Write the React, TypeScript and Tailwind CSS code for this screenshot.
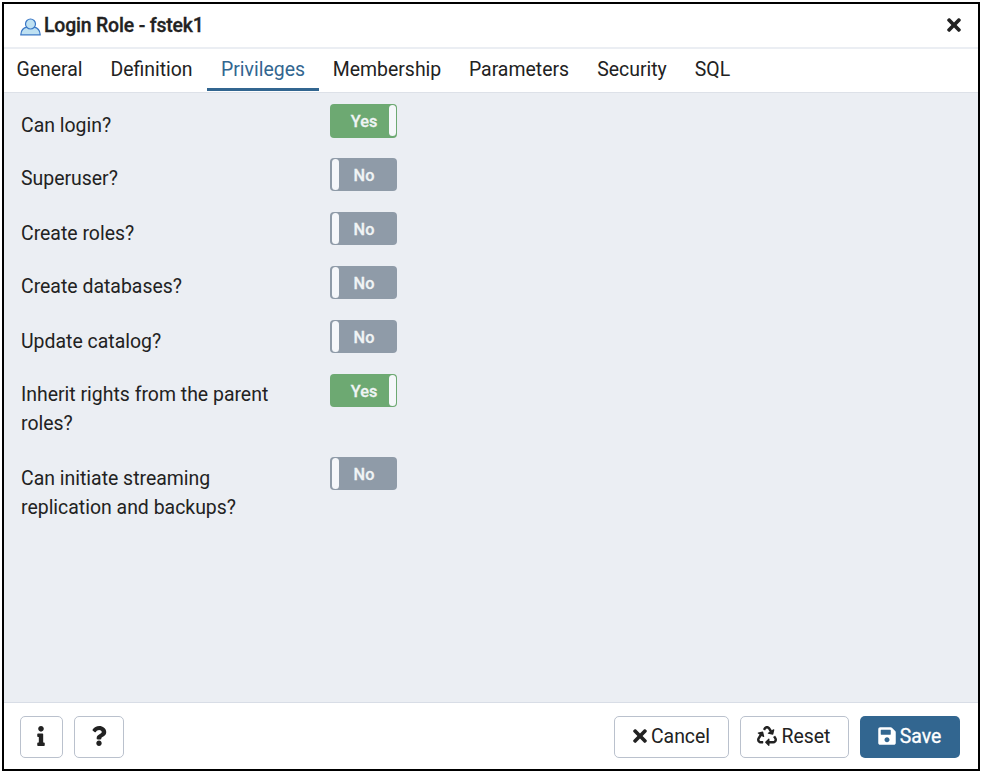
import React from "react";
import { FaInfo, FaQuestion, FaRecycle, FaSave, FaTimes } from "react-icons/fa";

const tabs = [
  { name: "General", width: "w-[93px]" },
  { name: "Definition", width: "w-[111px]" },
  { name: "Privileges", width: "w-[112px]" },
  { name: "Membership", width: "w-[136px]" },
  { name: "Parameters", width: "w-[128px]" },
  { name: "Security", width: "w-[98px]" },
  { name: "SQL", width: "w-[63px]" },
];

const privileges = [
  { label: "Can login?", on: true, height: "h-[53.6px]" },
  { label: "Superuser?", on: false, height: "h-[54.2px]" },
  { label: "Create roles?", on: false, height: "h-[53.8px]" },
  { label: "Create databases?", on: false, height: "h-[54.4px]" },
  { label: "Update catalog?", on: false, height: "h-[53.6px]" },
  { label: "Inherit rights from the parent roles?", on: true, height: "h-[83.4px]" },
  { label: "Can initiate streaming replication and backups?", on: false, height: "h-[83px]" },
];

function Toggle({ on }: { on: boolean }) {
  return (
    <button
      className={`flex h-[33.5px] w-[67px] items-center rounded-[4px] py-px text-[16.3px] font-medium text-[#f0f4f5] [-webkit-text-stroke:0.3px_#f0f4f5] ${
        on ? "bg-[#6da972] pr-[1px]" : "bg-[#8f9ba8] pl-[2px]"
      }`}
    >
      {!on && <span className="h-[31px] w-[7px] rounded-[4px] bg-[#f5f7fa]" />}
      <span className={`flex-1 pt-[2px] text-center ${on ? "pl-[9px]" : "pr-[8px]"}`}>{on ? "Yes" : "No"}</span>
      {on && <span className="h-[31px] w-[7px] rounded-[4px] bg-[#f5f7fa]" />}
    </button>
  );
}

const outline = "flex h-[42px] items-center justify-center rounded-[5px] border border-[#bac1cd] bg-white pb-px";

export default function App() {
  return (
    <div className="h-[772px] w-[981px] bg-white pl-[2px] pt-[2px] font-[Roboto,sans-serif] text-[19.45px] leading-[29px] text-[#222222]">
      <div className="flex h-[769px] w-[978px] flex-col border-2 border-black bg-white">
        <header className="flex h-[45px] shrink-0 items-center border-b-2 border-[#ebeef3] pb-px pl-[16px] pr-[14px]">
          <svg width="21" height="18" viewBox="0 0 21 18" className="mt-[4px] shrink-0" fill="#bfe1f2" stroke="#3b78c6" strokeWidth="1.2">
            <path d="M.8 16.8C1 12.8 3.6 9.7 7.2 9.2h6.6c3.6.5 6.2 3.6 6.4 7.6Z" />
            <circle cx="10.5" cy="6" r="5" />
          </svg>
          <h1 className="ml-[3px] flex-1 text-[19.45px] font-medium tracking-[-0.18px] [-webkit-text-stroke:0.3px_#222222]">Login Role - fstek1</h1>
          <FaTimes size={20} />
        </header>
        <nav className="flex h-[44px] shrink-0 border-b border-[#dde1e8]">
          {tabs.map((tab) => (
            <button
              key={tab.name}
              className={`flex h-[42px] items-center justify-center whitespace-nowrap ${tab.width} ${
                tab.name === "Privileges" ? "border-b-[3px] border-[#326690] pt-[2px] text-[#326690]" : "pb-px"
              } ${tab.name === "General" ? "-ml-px" : ""}`}
            >
              {tab.name}
            </button>
          ))}
        </nav>
        <main className="flex-1 bg-[#ebeef3] pl-[17px] pt-[11px]">
          {privileges.map((item) => (
            <div key={item.label} className={`flex ${item.height}`}>
              <label className="w-[309px] pr-[50px] pt-[6.8px]">{item.label}</label>
              <Toggle on={item.on} />
            </div>
          ))}
        </main>
        <footer className="flex h-[67px] shrink-0 items-start border-t border-[#d8dde6] pl-[16px] pr-[18px] pt-[13px]">
          <button className={`${outline} w-[43px] pr-px`} aria-label="Info">
            <FaInfo size={20} className="-mt-px" />
          </button>
          <button className={`${outline} ml-[11px] w-[50px]`} aria-label="Help">
            <FaQuestion size={20} className="-mt-px" />
          </button>
          <div className="flex-1" />
          <button className={`${outline} w-[115px] pr-[3px]`}>
            <FaTimes size={20} className="-mt-px mr-px" />
            Cancel
          </button>
          <button className={`${outline} ml-[11px] w-[109px] gap-[5px] pr-[2px]`}>
            <FaRecycle size={20} className="-mt-px" />
            Reset
          </button>
          <button className="ml-[11px] flex h-[42px] w-[100px] items-center justify-center gap-[3px] rounded-[5px] bg-[#326690] pb-px pr-[2px] text-white [-webkit-text-stroke:0.3px_white]">
            <FaSave size={20} className="-mt-px" />
            Save
          </button>
        </footer>
      </div>
    </div>
  );
}
